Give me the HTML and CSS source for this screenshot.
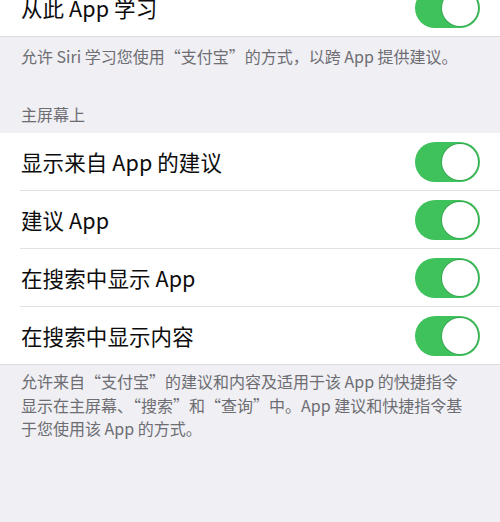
FILE: index.html
```html
<!DOCTYPE html>
<html lang="zh-CN">
<head>
<meta charset="utf-8">
<link rel="stylesheet" href="styles.css">
</head>
<body>
<div class="page">
  <div class="group group-top">
    <div class="row">
      <span class="label">从此 App 学习</span>
      <span class="toggle"><span class="knob"></span></span>
    </div>
  </div>
  <p class="caption caption-first">允许 Siri 学习您使用“支付宝”的方式，以跨 App 提供建议。</p>
  <p class="header">主屏幕上</p>
  <div class="group">
    <div class="row">
      <span class="label">显示来自 App 的建议</span>
      <span class="toggle"><span class="knob"></span></span>
    </div>
    <div class="row">
      <span class="label">建议 App</span>
      <span class="toggle"><span class="knob"></span></span>
    </div>
    <div class="row">
      <span class="label">在搜索中显示 App</span>
      <span class="toggle"><span class="knob"></span></span>
    </div>
    <div class="row">
      <span class="label">在搜索中显示内容</span>
      <span class="toggle"><span class="knob"></span></span>
    </div>
  </div>
  <p class="caption caption-last">允许来自“支付宝”的建议和内容及适用于该 App 的快捷指令<br>显示在主屏幕、“搜索”和“查询”中。App 建议和快捷指令基<br>于您使用该 App 的方式。</p>
</div>
</body>
</html>
```

FILE: styles.css
```css
html, body {
  margin: 0;
  padding: 0;
  background: #efeff4;
}
body {
  width: 500px;
  height: 522px;
  overflow: hidden;
  font-family: "Noto Sans CJK SC", "Noto Sans", sans-serif;
}
.page {
  display: flex;
  flex-direction: column;
}
.group {
  background: #ffffff;
  display: flex;
  flex-direction: column;
  border-bottom: 1px solid #dcdce0;
}
.group-top {
  margin-top: -21px;
}
.row {
  height: 57px;
  display: flex;
  align-items: center;
  justify-content: space-between;
  padding: 0 20px 0 21px;
}
.group .row + .row {
  border-top: 1px solid #e2e2e6;
  margin-left: 20px;
  padding-left: 1px;
}
.label {
  font-size: 21.5px;
  color: #0c0c0c;
  letter-spacing: 0.1px;
}
.toggle {
  width: 65px;
  height: 40px;
  border-radius: 20px;
  background: #3fc25c;
  display: flex;
  align-items: center;
  justify-content: flex-end;
  padding-right: 2px;
  box-sizing: border-box;
}
.knob {
  width: 36px;
  height: 36px;
  border-radius: 50%;
  background: #ffffff;
  box-shadow: 0 0 0 1px rgba(40, 120, 60, 0.35);
}
.caption {
  margin: 0;
  padding: 0 21px;
  font-size: 16px;
  color: #6d6d72;
}
.caption-first {
  padding-top: 8px;
  line-height: 22px;
}
.header {
  margin: 37px 0 0;
  padding: 0 21px 8px;
  font-size: 16px;
  line-height: 21px;
  color: #6d6d72;
}
.caption-last {
  padding-top: 5px;
  line-height: 23.5px;
}
```
